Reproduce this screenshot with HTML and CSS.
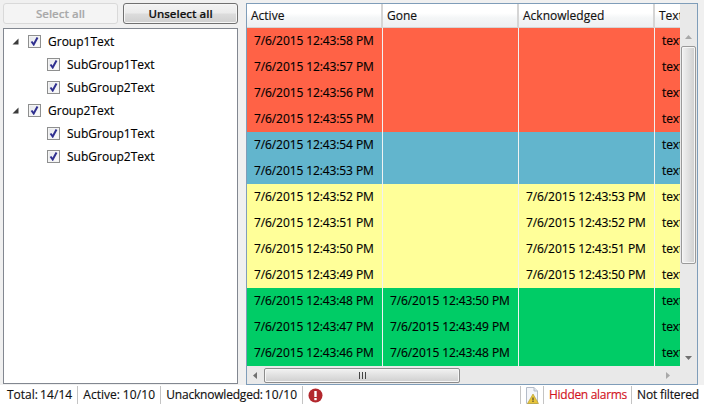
FILE: index.html
```html
<!DOCTYPE html>
<html lang="en">
<head>
<meta charset="utf-8">
<title>Alarms</title>
<link rel="stylesheet" href="styles.css">
</head>
<body>
<div class="app">
  <div class="main">
    <div class="left">
      <div class="buttons">
        <button class="btn" disabled>Select all</button>
        <button class="btn btn-active">Unselect all</button>
      </div>
      <div class="tree">
        <div class="node"><svg class="exp" width="7" height="7" viewBox="0 0 7 7"><path d="M6.500 0.500V6.500H0.500Z" fill="#3c3c3c"/></svg><span class="cb"><svg width="9" height="9" viewBox="0 0 9 9"><path d="M1.500 4.500L3.700 7.500L7.500 0.500" fill="none" stroke="#2f2f8f" stroke-width="2"/></svg></span><span>Group1Text</span></div>
        <div class="node sub"><span class="cb"><svg width="9" height="9" viewBox="0 0 9 9"><path d="M1.500 4.500L3.700 7.500L7.500 0.500" fill="none" stroke="#2f2f8f" stroke-width="2"/></svg></span><span>SubGroup1Text</span></div>
        <div class="node sub"><span class="cb"><svg width="9" height="9" viewBox="0 0 9 9"><path d="M1.500 4.500L3.700 7.500L7.500 0.500" fill="none" stroke="#2f2f8f" stroke-width="2"/></svg></span><span>SubGroup2Text</span></div>
        <div class="node"><svg class="exp" width="7" height="7" viewBox="0 0 7 7"><path d="M6.500 0.500V6.500H0.500Z" fill="#3c3c3c"/></svg><span class="cb"><svg width="9" height="9" viewBox="0 0 9 9"><path d="M1.500 4.500L3.700 7.500L7.500 0.500" fill="none" stroke="#2f2f8f" stroke-width="2"/></svg></span><span>Group2Text</span></div>
        <div class="node sub"><span class="cb"><svg width="9" height="9" viewBox="0 0 9 9"><path d="M1.500 4.500L3.700 7.500L7.500 0.500" fill="none" stroke="#2f2f8f" stroke-width="2"/></svg></span><span>SubGroup1Text</span></div>
        <div class="node sub"><span class="cb"><svg width="9" height="9" viewBox="0 0 9 9"><path d="M1.500 4.500L3.700 7.500L7.500 0.500" fill="none" stroke="#2f2f8f" stroke-width="2"/></svg></span><span>SubGroup2Text</span></div>
      </div>
    </div>
    <div class="grid">
      <div class="upper">
        <div class="table">
          <div class="row head"><div class="hc">Active</div><div class="hc">Gone</div><div class="hc">Acknowledged</div><div class="hc last">Text</div></div>
          <div class="row red"><div class="c">7/6/2015 12:43:58 PM</div><div class="c"></div><div class="c"></div><div class="c last">text</div></div>
          <div class="row red"><div class="c">7/6/2015 12:43:57 PM</div><div class="c"></div><div class="c"></div><div class="c last">text</div></div>
          <div class="row red"><div class="c">7/6/2015 12:43:56 PM</div><div class="c"></div><div class="c"></div><div class="c last">text</div></div>
          <div class="row red"><div class="c">7/6/2015 12:43:55 PM</div><div class="c"></div><div class="c"></div><div class="c last">text</div></div>
          <div class="row blue"><div class="c">7/6/2015 12:43:54 PM</div><div class="c"></div><div class="c"></div><div class="c last">text</div></div>
          <div class="row blue"><div class="c">7/6/2015 12:43:53 PM</div><div class="c"></div><div class="c"></div><div class="c last">text</div></div>
          <div class="row yellow"><div class="c">7/6/2015 12:43:52 PM</div><div class="c"></div><div class="c">7/6/2015 12:43:53 PM</div><div class="c last">text</div></div>
          <div class="row yellow"><div class="c">7/6/2015 12:43:51 PM</div><div class="c"></div><div class="c">7/6/2015 12:43:52 PM</div><div class="c last">text</div></div>
          <div class="row yellow"><div class="c">7/6/2015 12:43:50 PM</div><div class="c"></div><div class="c">7/6/2015 12:43:51 PM</div><div class="c last">text</div></div>
          <div class="row yellow"><div class="c">7/6/2015 12:43:49 PM</div><div class="c"></div><div class="c">7/6/2015 12:43:50 PM</div><div class="c last">text</div></div>
          <div class="row green"><div class="c">7/6/2015 12:43:48 PM</div><div class="c">7/6/2015 12:43:50 PM</div><div class="c"></div><div class="c last">text</div></div>
          <div class="row green"><div class="c">7/6/2015 12:43:47 PM</div><div class="c">7/6/2015 12:43:49 PM</div><div class="c"></div><div class="c last">text</div></div>
          <div class="row green"><div class="c">7/6/2015 12:43:46 PM</div><div class="c">7/6/2015 12:43:48 PM</div><div class="c"></div><div class="c last">text</div></div>
        </div>
        <div class="vbar">
          <svg class="arrow-up" width="7" height="4" viewBox="0 0 7 4"><path d="M0 4L3.500 0L7 4Z" fill="#a8a8a8"/></svg>
          <div class="vthumb"></div>
          <svg class="arrow-down" width="7" height="4" viewBox="0 0 7 4"><path d="M0 0H7L3.500 4Z" fill="#707070"/></svg>
        </div>
      </div>
      <div class="hbar">
        <svg class="arrow-left" width="4" height="7" viewBox="0 0 4 7"><path d="M4 0V7L0 3.500Z" fill="#707070"/></svg>
        <div class="hthumb"><span class="grip"></span></div>
        <svg class="arrow-right" width="4" height="7" viewBox="0 0 4 7"><path d="M0 0V7L4 3.500Z" fill="#a8a8a8"/></svg>
      </div>
    </div>
  </div>
  <div class="status">
    <span class="st st-first"><span>Total:</span><span class="num">14/14</span></span>
    <span class="st"><span class="wide">Active:</span><span class="num">10/10</span></span>
    <span class="st"><span class="tight">Unacknowledged:</span><span class="num">10/10</span></span>
    <span class="st st-icon"><svg width="15" height="15" viewBox="0 0 15 15"><circle cx="7.500" cy="7.500" r="7" fill="#b3272d"/><rect x="6.300" y="3" width="2.400" height="6" fill="#fff"/><rect x="6.300" y="10" width="2.400" height="2.200" fill="#fff"/></svg></span>
    <span class="spacer"></span>
    <span class="st st-icon st-doc"><svg width="14" height="17" viewBox="0 0 14 17"><path d="M1.500 0.500H9L12.500 4V16.500H1.500Z" fill="#f4f6fa" stroke="#b4bcc8"/><path d="M9 .5V4H12.500" fill="#dde3ec" stroke="#b4bcc8"/><path d="M8 7L13.500 16.500H2.500Z" fill="#e8c53a" stroke="#b39a2a" stroke-width=".6"/><rect x="7.500" y="10.500" width="1" height="3" fill="#333"/><rect x="7.500" y="14" width="1" height="1" fill="#333"/></svg></span>
    <span class="st hidden-al">Hidden alarms</span>
    <span class="st not-f">Not filtered</span>
  </div>
</div>
</body>
</html>
```

FILE: styles.css
```css
* { box-sizing: border-box; }
html, body { margin: 0; padding: 0; background: #fff; }
body { font-family: "Open Sans", "Noto Sans", sans-serif; font-size: 12px; color: #000; overflow: hidden; -webkit-text-stroke: 0.15px currentColor; }
.app { width: 704px; height: 404px; display: flex; flex-direction: column; }
.main { height: 385px; background: #f0f0f0; display: flex; padding: 3px 6px 0 3px; gap: 8px; }
.left { width: 235px; display: flex; flex-direction: column; gap: 4px; }
.buttons { display: flex; gap: 5px; height: 21px; }
.btn { flex: 1; font: 600 11.500px "Open Sans", sans-serif; padding: 0; border: 1px solid #d9d9d9; border-radius: 3px; background: #f4f4f4; color: #a9a9a9; }
.btn-active { border-color: #707070; color: #111; background: linear-gradient(#f3f3f3 0%, #ebebeb 48%, #dcdcdc 52%, #cfcfcf 100%); box-shadow: inset 0 0 0 1px #f6f6f6; }
.tree { flex: 1; margin-bottom: 1px; background: #fff; border: 1px solid #828790; padding: 1px 0 0 8px; }
.node { height: 23px; display: flex; align-items: center; white-space: nowrap; }
.exp { margin-right: 9px; flex: none; }
.node .cb { margin-right: 7px; }
.sub { padding-left: 35px; }
.cb { width: 13px; height: 13px; border: 1px solid #8e8f8f; background: linear-gradient(135deg, #e4e6ea, #fdfdfd); box-shadow: inset 0 0 0 1px #f4f4f4; display: flex; align-items: center; justify-content: center; flex: none; }
.grid { width: 452px; border: 1px solid #7f9db9; background: #e9e9e9; display: flex; flex-direction: column; }
.upper { flex: 1; display: flex; min-height: 0; }
.table { width: 433px; overflow: hidden; }
.row { display: grid; grid-template-columns: 136px 136px 136px 60px; height: 26px; line-height: 26px; white-space: nowrap; }
.head { height: 24px; line-height: 23px; background: linear-gradient(#fff 0%, #fff 40%, #f4f6f7 60%, #eef0f2 100%); border-bottom: 1px solid #d5d5d5; }
.hc { padding-left: 4px; border-right: 2px solid #d5d5d5; color: #111; }
.c { padding-left: 7px; border-right: 1px solid #f1f1f1; color: #000; letter-spacing: -0.1px; }
.last { border-right: 0; }
.red { background: #ff6246; }
.blue { background: #62b5cd; }
.yellow { background: #ffff99; }
.green { background: #00cc66; }
.vbar { width: 17px; background: #e9e9e9; display: flex; flex-direction: column; align-items: center; }
.arrow-up { margin-top: 31px; }
.vthumb { width: 15px; height: 218px; margin-top: 7px; border: 1px solid #9a9a9a; border-radius: 2px; background: linear-gradient(90deg, #f2f2f2, #e0e0e0 50%, #cfcfcf); box-shadow: inset 0 0 0 1px #f6f6f6; }
.arrow-down { margin-top: 92px; }
.hbar { height: 18px; display: flex; align-items: center; padding-left: 6px; background: #e9e9e9; }
.hthumb { width: 196px; height: 15px; margin-left: 7px; border: 1px solid #8c8c8c; border-radius: 2px; background: linear-gradient(#f2f2f2, #e0e0e0 50%, #cfcfcf); box-shadow: inset 0 0 0 1px #f6f6f6; display: flex; align-items: center; justify-content: center; }
.grip { width: 7px; height: 7px; background: repeating-linear-gradient(90deg, #444 0 1px, transparent 1px 3px); }
.arrow-right { margin-left: 206px; }
.status { height: 19px; display: flex; align-items: center; padding: 1px 0 0 7px; white-space: nowrap; color: #111; }
.st { height: 18px; line-height: 18px; display: flex; gap: 2px; padding: 0 5px; border-left: 1px solid #c4c4c4; }
.st-first { border-left: 0; padding-left: 0; }
.st-icon { align-items: center; }
.st-doc { padding: 0 4px; }
.num { letter-spacing: .1px; }
.wide { margin-right: 1px; }
.tight { letter-spacing: -0.2px; }
.spacer { flex: 1; }
.hidden-al { color: #d2141e; letter-spacing: -0.3px; padding-right: 4px; }
.not-f { letter-spacing: -0.15px; }
```
